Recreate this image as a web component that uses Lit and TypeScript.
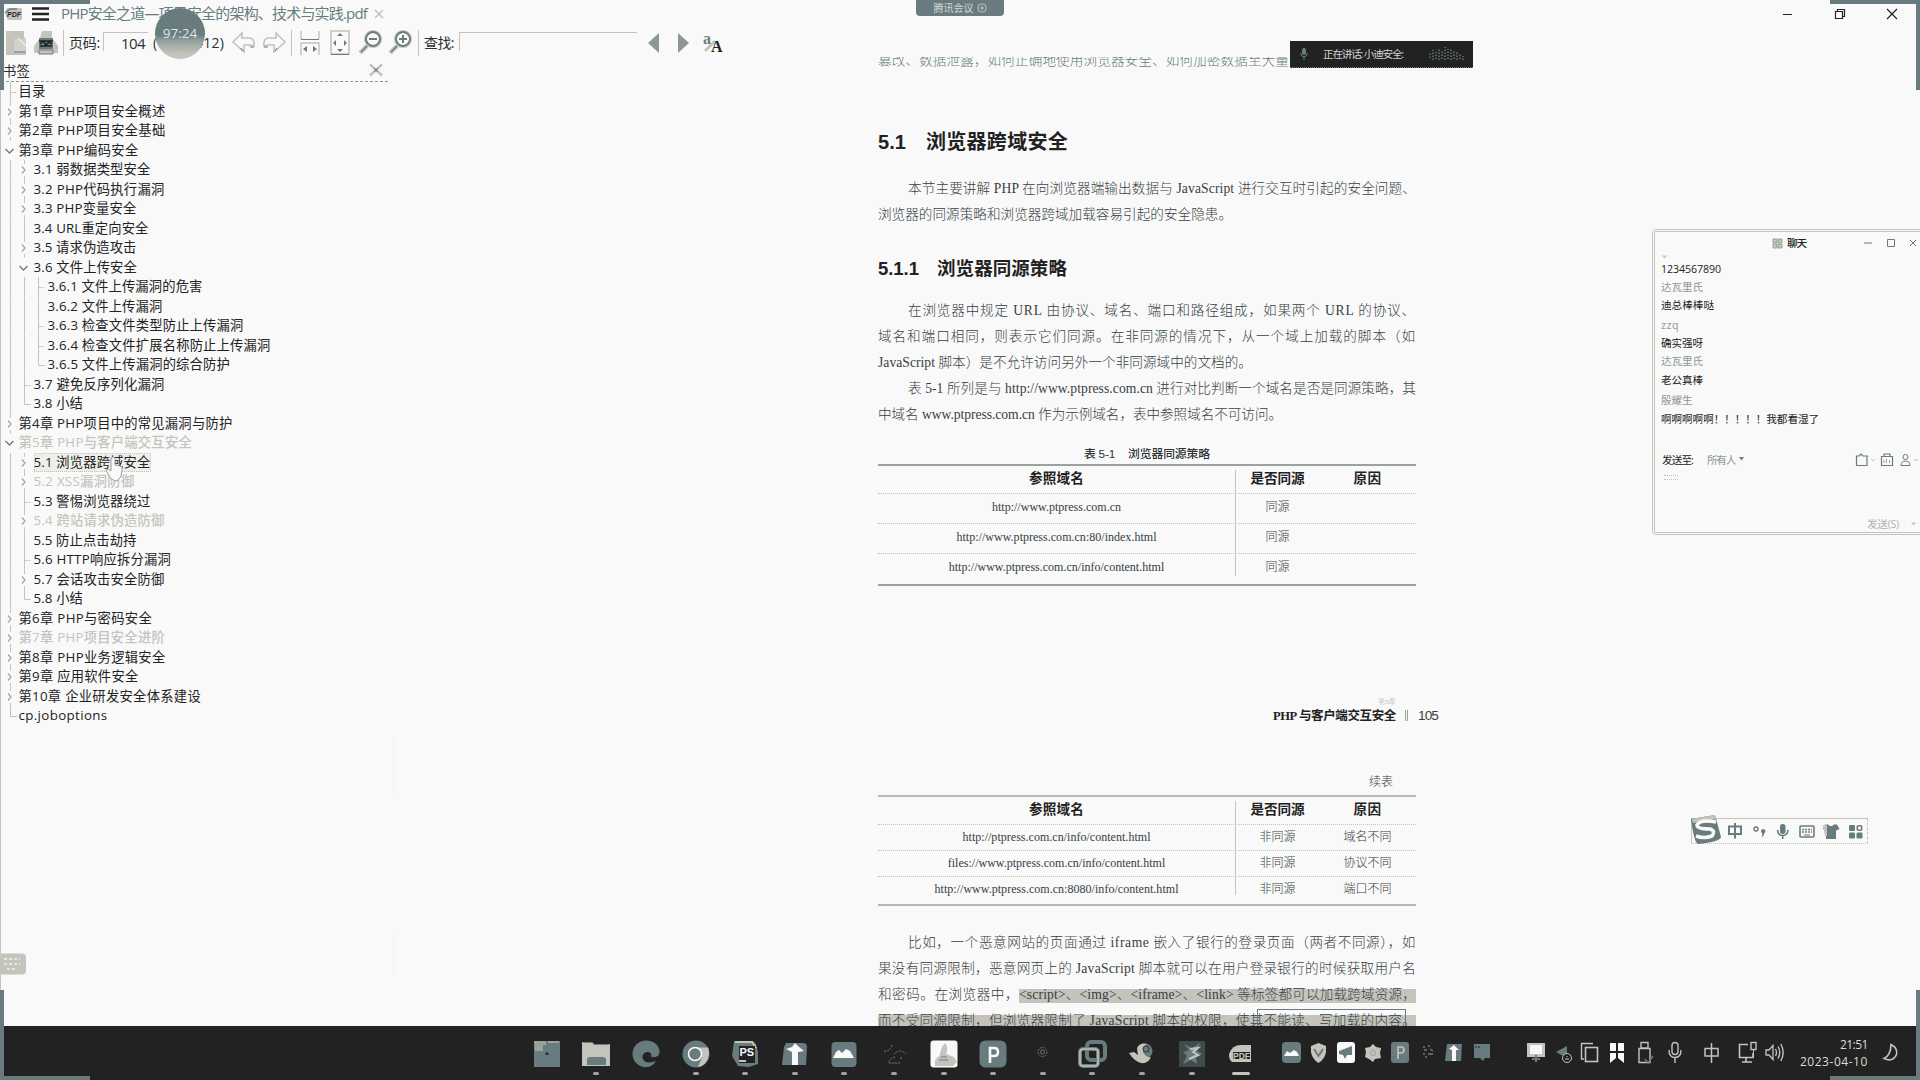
import { LitElement, html, svg, css, nothing, TemplateResult } from "lit";
import { customElement, property } from "lit/decorators.js";
import { classMap } from "lit/directives/class-map.js";

/** One line of text, tracked so that it fills exactly `w` pixels. */
@customElement("fit-text")
class FitText extends LitElement {
  static styles = css`
    :host { display: inline-block; white-space: pre; }
    span { display: inline-block; }
  `;
  @property({ type: Number }) w = 0;
  @property() text = "";
  render() { return html`<span>${this.text}</span>`; }
  updated() {
    const s = this.renderRoot.querySelector("span") as HTMLElement;
    s.style.letterSpacing = "0px";
    const n = Array.from(this.text).length;
    const natural = s.getBoundingClientRect().width;
    if (n > 1 && this.w) s.style.letterSpacing = `${(this.w - natural) / n}px`;
    this.style.width = `${this.w}px`;
  }
}

const fit = (text: string, w: number, cls = "") => html`<fit-text class=${cls} .text=${text} .w=${w}></fit-text>`;
const icon = (w: number, h: number, body: unknown, cls = "") =>
  html`<svg class=${cls} width=${w} height=${h} viewBox="0 0 ${w} ${h}" fill="none">${body}</svg>`;

const T = "#687c80";
const L = "#c4c4bc";
const D = "#222222";
const W = "#f9f9f9";

type Mark = "" | "closed" | "open" | "tee" | "end";
interface Item { d: number; t: string; end: number; m: Mark; faded?: boolean; sel?: boolean }
const tree: Item[] = [
  { d: 0, t: "目录", end: 46, m: "tee" },
  { d: 0, t: "第1章 PHP项目安全概述", end: 166, m: "closed" },
  { d: 0, t: "第2章 PHP项目安全基础", end: 166, m: "closed" },
  { d: 0, t: "第3章 PHP编码安全", end: 139, m: "open" },
  { d: 1, t: "3.1 弱数据类型安全", end: 151, m: "closed" },
  { d: 1, t: "3.2 PHP代码执行漏洞", end: 165, m: "closed" },
  { d: 1, t: "3.3 PHP变量安全", end: 137, m: "closed" },
  { d: 1, t: "3.4 URL重定向安全", end: 149, m: "" },
  { d: 1, t: "3.5 请求伪造攻击", end: 137, m: "closed" },
  { d: 1, t: "3.6 文件上传安全", end: 137.5, m: "open" },
  { d: 2, t: "3.6.1 文件上传漏洞的危害", end: 203, m: "tee" },
  { d: 2, t: "3.6.2 文件上传漏洞", end: 163, m: "" },
  { d: 2, t: "3.6.3 检查文件类型防止上传漏洞", end: 244, m: "tee" },
  { d: 2, t: "3.6.4 检查文件扩展名称防止上传漏洞", end: 271, m: "tee" },
  { d: 2, t: "3.6.5 文件上传漏洞的综合防护", end: 230.5, m: "end" },
  { d: 1, t: "3.7 避免反序列化漏洞", end: 165, m: "tee" },
  { d: 1, t: "3.8 小结", end: 83.5, m: "end" },
  { d: 0, t: "第4章 PHP项目中的常见漏洞与防护", end: 233, m: "closed" },
  { d: 0, t: "第5章 PHP与客户端交互安全", end: 192.5, m: "open", faded: true },
  { d: 1, t: "5.1 浏览器跨域安全", end: 151, m: "closed", sel: true },
  { d: 1, t: "5.2 XSS漏洞防御", end: 135, m: "closed", faded: true },
  { d: 1, t: "5.3 警惕浏览器绕过", end: 151, m: "tee" },
  { d: 1, t: "5.4 跨站请求伪造防御", end: 165, m: "closed", faded: true },
  { d: 1, t: "5.5 防止点击劫持", end: 137, m: "" },
  { d: 1, t: "5.6 HTTP响应拆分漏洞", end: 171.5, m: "tee" },
  { d: 1, t: "5.7 会话攻击安全防御", end: 165, m: "closed" },
  { d: 1, t: "5.8 小结", end: 83.5, m: "end" },
  { d: 0, t: "第6章 PHP与密码安全", end: 152.5, m: "closed" },
  { d: 0, t: "第7章 PHP项目安全进阶", end: 165.5, m: "closed", faded: true },
  { d: 0, t: "第8章 PHP业务逻辑安全", end: 166, m: "closed" },
  { d: 0, t: "第9章 应用软件安全", end: 139, m: "closed" },
  { d: 0, t: "第10章 企业研发安全体系建设", end: 201.5, m: "closed" },
  { d: 0, t: "cp.joboptions", end: 108, m: "end" },
];

const marks: Record<Mark, TemplateResult> = {
  "": svg`<path d="M7.5 0V19.5" stroke=${L}/>`,
  tee: svg`<path d="M7.5 0V19.5" stroke=${L}/><path d="M8 10.5H14" stroke=${L} stroke-dasharray="2 1"/>`,
  end: svg`<path d="M7.5 0V10.5H14" stroke=${L}/>`,
  closed: svg`<path d="M7.5 0V4M7.5 16V19.5" stroke=${L}/><path d="M5 6.5L8 10L5 13.5" stroke="#a0a49e" stroke-width="1.2"/>`,
  open: svg`<path d="M2.5 8L6.5 12L10.5 8" stroke=${T} stroke-width="1.3"/>`,
};

@customElement("bookmark-tree")
class BookmarkTree extends LitElement {
  static styles = css`
    :host { display: block; font: 13.3px/19.5px "Open Sans", "Noto Sans CJK SC", sans-serif; color: #222; }
    .row { display: flex; height: 19.5px; padding-left: 3px; }
    svg { display: block; flex: none; overflow: visible; }
    fit-text { margin-left: 1.5px; height: 19.5px; }
    .d1 { margin-left: 2.5px; }
    .d2 { margin-left: 2.5px; }
    .faded fit-text { color: #c4c4bc; font-weight: 500; }
    .sel fit-text { outline: 1px dotted #c4c4bc; outline-offset: -1px; background: #eeeeea; }
  `;
  render() {
    return tree.map((it) => {
      const start = [19, 34, 48][it.d];
      const guides = [];
      for (let i = 0; i < it.d; i++) guides.push(icon(14, 19.5, marks[""]));
      return html`<div class=${classMap({ row: true, faded: !!it.faded, sel: !!it.sel })}>
        ${guides}${icon(14, 19.5, marks[it.m])}${fit(it.t, it.end - start, "d" + it.d)}
      </div>`;
    });
  }
}

const magnifier = (plus: boolean) => icon(26, 26, svg`
  <path d="M9 16L2 23" stroke=${L} stroke-width="4.5"/><path d="M10 15L3 22" stroke=${T} stroke-width="1.4"/>
  <circle cx="15" cy="9" r="7.6" fill=${W} stroke=${L} stroke-width="3"/><circle cx="15" cy="9" r="7" stroke=${T} stroke-width="1.8"/>
  <path d=${plus ? "M11 9H19M15 5V13" : "M11 9H19"} stroke=${T} stroke-width="2"/>`);

@customElement("reader-header")
class ReaderHeader extends LitElement {
  static styles = css`
    :host { display: block; height: 57px; position: relative; color: #2b3032; font-family: "Open Sans", "Noto Sans CJK SC", sans-serif; }
    svg { display: block; flex: none; overflow: visible; }
    .title { height: 28px; display: flex; align-items: center; padding-left: 5px; box-sizing: border-box; }
    .burger { margin-left: 10px; }
    .name { margin-left: 12px; font-size: 15px; line-height: 24px; height: 24px; margin-top: -3px; color: #687c80; }
    .tabx { margin-left: 7px; }
    .win { margin-left: auto; display: flex; align-items: center; gap: 40px; padding-right: 22px; }
    .bar { height: 29px; display: flex; align-items: center; padding-left: 4px; font-size: 14px; line-height: 24px; }
    .bar fit-text { height: 24px; }
    .sep { width: 1px; height: 26px; background: #c4c4bc; flex: none; }
    .field { border-left: 1px solid #c4c4bc; border-top: 1px solid #c4c4bc; height: 19px; box-sizing: border-box; flex: none; margin-top: -3px; display: flex; }
    .page { width: 45px; margin-left: 3px; line-height: 20px; padding-left: 17px; box-sizing: border-box; font-size: 15px; }
    .page fit-text { height: 20px; }
    .find { width: 178px; margin-left: 5px; }
    .timer { position: absolute; left: 155px; top: 8px; width: 50px; height: 51px; border-radius: 50%; background: linear-gradient(#687c80 52%, #929f9c 64%, #c4c4bc 90%); color: #e4e4de; font: 500 13.5px/50px "Open Sans", sans-serif; text-align: center; z-index: 3; }
    .meeting { position: absolute; left: 916px; top: 0; width: 88px; height: 16px; background: #687c80; border-radius: 0 0 4px 4px; color: #d4d6d0; font-size: 10px; line-height: 15px; display: flex; justify-content: center; align-items: center; gap: 3px; }
  `;
  render() {
    return html`
      <div class="title">
        ${icon(17, 14, svg`<path d="M2 1H17V13H3C0 9 0 4 2 1Z" fill=${L}/><path d="M0 6L5 2H12" stroke=${T} stroke-width="1.5"/><text x="2" y="10" font-size="7" font-weight="700" font-style="italic" font-family="Liberation Sans, sans-serif" fill=${D}>PDF</text>`)}
        ${icon(17, 14, svg`<path d="M0 1.5H17M0 7H17M0 12.5H17" stroke=${D} stroke-width="2.6"/>`, "burger")}
        ${fit("PHP安全之道—项目安全的架构、技术与实践.pdf", 306, "name")}
        ${icon(10, 10, svg`<path d="M1 1L9 9M9 1L1 9" stroke=${L} stroke-width="1.6"/>`, "tabx")}
        <div class="win">
          ${icon(12, 12, svg`<path d="M1 6.5H10" stroke=${D}/>`)}
          ${icon(12, 12, svg`<path d="M1.5 3.5H8.5V10.5H1.5ZM3.5 3V1.5H10.5V8.5H9" stroke=${D} stroke-width="1.2"/>`)}
          ${icon(12, 12, svg`<path d="M1 1L11 11M11 1L1 11" stroke=${D} stroke-width="1.2"/>`)}
        </div>
      </div>
      <div class="bar">
        ${icon(24, 26, svg`<path d="M2 1H20V7L22 9V25H2Z" fill=${L}/><path d="M10 9H22V22H10Z" fill="#d2d2cb"/><path d="M10 22H22" stroke=${T}/><path d="M14 8L22 16" stroke=${W}/>`)}
        <span style="width:5px"></span>
        ${icon(26, 26, svg`<path d="M9 1H19V8L25 16V23H1V16L7 8Z" fill=${L}/><path d="M6 8H20V19H6Z" fill=${T}/><path d="M6 11H20M7 14L10 11L13 15L16 12L19 14M7 16H19" stroke=${D} stroke-width="1.6"/><path d="M6 20H20V24H6Z" fill=${L} stroke=${T}/>`)}
        <span style="width:4px"></span><span class="sep"></span><span style="width:5px"></span>
        ${fit("页码:", 31)}
        <span class="field page">${fit("104", 24)}</span>
        <span style="width:5px"></span>${fit("(118 / 412)", 71)}
        <span style="width:8px"></span>
        ${icon(24, 24, svg`<path d="M1 11L10 2V7H18Q23 8 22 15L18 14H12V21Z" stroke=${L} stroke-width="1.6"/><path d="M11 20L9 17M18 16H22" stroke=${T}/>`)}
        <span style="width:6px"></span>
        ${icon(24, 24, svg`<path d="M23 11L14 2V7H6Q1 8 2 15L6 14H12V21Z" stroke=${L} stroke-width="1.6"/><path d="M13 20L15 17M6 16H2" stroke=${T}/>`)}
        <span style="width:5px"></span><span class="sep"></span><span style="width:8px"></span>
        ${icon(20, 26, svg`<path d="M1 1V9M19 1V9M1 25V13H19V25" stroke=${L} stroke-width="1.4"/><path d="M1 9.5H19" stroke=${T}/><path d="M3 19L7 16V22ZM17 19L13 16V22Z" fill=${T}/>`)}
        <span style="width:10px"></span>
        ${icon(20, 26, svg`<path d="M1 1H19V24H1Z" stroke=${L} stroke-width="1.6"/><path d="M1 24.5H19" stroke=${T}/><path d="M7 6L10 3L13 6ZM7 19L10 22L13 19ZM6 10L3 13L6 16ZM14 10L17 13L14 16Z" fill=${T}/>`)}
        <span style="width:8px"></span>${magnifier(false)}
        <span style="width:4px"></span>${magnifier(true)}
        <span style="width:4px"></span><span class="sep"></span><span style="width:5px"></span>
        ${fit("查找:", 30)}
        <span class="field find"></span>
        <span style="width:11px"></span>
        ${icon(12, 20, svg`<path d="M11 0V20L0 10Z" fill="#8b9896"/>`)}
        <span style="width:18px"></span>
        ${icon(12, 20, svg`<path d="M0 0V20L11 10Z" fill="#8b9896"/>`)}
        <span style="width:13px"></span>
        ${icon(22, 22, svg`<path d="M2 19L12 9" stroke=${L} stroke-width="3"/><text x="0" y="12" font-size="16" font-weight="700" font-family="Liberation Serif, serif" fill=${T}>a</text><text x="8" y="20" font-size="16" font-weight="700" font-family="Liberation Serif, serif" fill=${D}>A</text>`)}
      </div>
      <div class="timer">97:24</div>
      <div class="meeting">腾讯会议 ${icon(10, 10, svg`<rect x="1" y="1" width="8" height="8" rx="3" stroke=${L}/><path d="M3 5H7M5 3V7" stroke=${L}/>`)}</div>
    `;
  }
}

interface Row { u: string; w: number; s: string; r: string }
const same: Row[] = [
  { u: "http://www.ptpress.com.cn", w: 129, s: "同源", r: "" },
  { u: "http://www.ptpress.com.cn:80/index.html", w: 200, s: "同源", r: "" },
  { u: "http://www.ptpress.com.cn/info/content.html", w: 215.5, s: "同源", r: "" },
];
const diff: Row[] = [
  { u: "http://ptpress.com.cn/info/content.html", w: 188, s: "非同源", r: "域名不同" },
  { u: "files://www.ptpress.com.cn/info/content.html", w: 217.5, s: "非同源", r: "协议不同" },
  { u: "http://www.ptpress.com.cn:8080/info/content.html", w: 244, s: "非同源", r: "端口不同" },
];

@customElement("pdf-page")
class PdfPage extends LitElement {
  static styles = css`
    :host { display: block; box-sizing: border-box; width: 538px; font: 300 13.6px/26px "Liberation Serif", "Noto Sans CJK SC", serif; color: #364043; }
    fit-text { vertical-align: top; height: 26px; }
    .line { height: 26px; white-space: nowrap; }
    .in { padding-left: 30px; }
    .first { margin-top: -9px; color: #687c80; }
    h2, h3 { margin: 0; height: 40px; line-height: 40px; display: flex; font-family: "Liberation Sans", "Noto Sans CJK SC", sans-serif; font-weight: 700; color: #222; }
    h2 fit-text, h3 fit-text { height: 40px; }
    h2 { font-size: 20px; margin-top: 48px; gap: 20px; }
    h3 { font-size: 18.5px; margin-top: 21px; gap: 18px; }
    .p1 { margin-top: 13.5px; }
    .p2 { margin-top: 9.5px; }
    .p3 { margin-top: 24.5px; }
    .cap { margin-top: 16px; height: 20px; display: flex; justify-content: center; gap: 13px; font: 500 11.8px/20px "Liberation Sans", "Noto Sans CJK SC", sans-serif; color: #2d3335; }
    .cap fit-text { height: 20px; }
    .table { border-top: 2px solid #9aa39f; border-bottom: 2px solid #9aa39f; height: 117.5px; }
    .table.b { height: 107px; border-color: #b6b9b2; }
    .row { display: grid; grid-template-columns: 357px 84px 97px; box-sizing: border-box; height: 30px; border-bottom: 1px dotted #c4c4bc; text-align: center; }
    .row > div { display: flex; align-items: flex-start; justify-content: center; height: 100%; font-size: 12px; line-height: 26px; box-sizing: border-box; }
    .row fit-text { height: 26px; }
    .b .row { height: 26.3px; }
    .b .row:not(.head) fit-text { margin-top: -1px; }
    .row > .s { border-left: 1px solid #c4c4bc; }
    .row.head, .b .row.head { height: 28px; }
    .row.head > div { font-weight: 700; font-size: 13.6px; color: #222; }
    .row.head > .s { margin-top: 4px; height: 23px; }
    .row.head > .s fit-text { margin-top: -4px; }
    .row:last-child { border-bottom: 0; }
    .row:last-child > .s { height: calc(100% - 8px); }
    .folio { margin-top: 110px; width: 560px; display: flex; justify-content: flex-end; align-items: flex-end; height: 29px; }
    .folio fit-text { height: 18px; line-height: 18px; }
    .chap { display: flex; flex-direction: column; align-items: flex-end; }
    .chap .tiny { font-size: 7px; line-height: 10px; height: 10px; color: #a9ada6; }
    .chap .t { font-weight: 700; font-size: 12.5px; color: #222; }
    .bars { display: flex; gap: 1px; margin: 0 10px 4px 9px; }
    .bars i { width: 1px; height: 11px; background: #9aa39f; }
    .num { font-family: "Liberation Sans", sans-serif; font-weight: 400; }
    .cont { margin-top: 46px; height: 24px; line-height: 22px; text-align: right; padding-right: 23px; font-size: 12px; }
    .hl { background: linear-gradient(#c4c4bc, #c4c4bc) 0 7px / 100% 14px no-repeat; }
    .mark { position: relative; }
    .box { position: absolute; left: 379px; top: 1px; width: 147px; height: 30px; border: 1px solid #687c80; }
  `;
  private table(rows: Row[], b: boolean) {
    return html`<div class=${classMap({ table: true, b })}>
      <div class="row head"><div>${fit("参照域名", 55)}</div><div class="s">${fit("是否同源", 54)}</div><div>${fit("原因", 28)}</div></div>
      ${rows.map((r) => html`<div class="row"><div>${fit(r.u, r.w)}</div><div class="s">${fit(r.s, r.s.length * 12)}</div><div>${r.r ? fit(r.r, 48) : nothing}</div></div>`)}
    </div>`;
  }
  render() {
    return html`
      <div class="line first">${fit("篡改、数据泄露，如何正确地使用浏览器安全、如何加密数据至大量", 411)}</div>
      <h2>${fit("5.1", 28)}${fit("浏览器跨域安全", 142)}</h2>
      <div class="p1">
        <div class="line in">${fit("本节主要讲解 PHP 在向浏览器端输出数据与 JavaScript 进行交互时引起的安全问题、", 508)}</div>
        <div class="line">${fit("浏览器的同源策略和浏览器跨域加载容易引起的安全隐患。", 354)}</div>
      </div>
      <h3>${fit("5.1.1", 41)}${fit("浏览器同源策略", 130)}</h3>
      <div class="p2">
        <div class="line in">${fit("在浏览器中规定 URL 由协议、域名、端口和路径组成，如果两个 URL 的协议、", 508)}</div>
        <div class="line">${fit("域名和端口相同，则表示它们同源。在非同源的情况下，从一个域上加载的脚本（如", 538)}</div>
        <div class="line">${fit("JavaScript 脚本）是不允许访问另外一个非同源域中的文档的。", 374)}</div>
        <div class="line in">${fit("表 5-1 所列是与 http://www.ptpress.com.cn 进行对比判断一个域名是否是同源策略，其", 508)}</div>
        <div class="line">${fit("中域名 www.ptpress.com.cn 作为示例域名，表中参照域名不可访问。", 404)}</div>
      </div>
      <div class="cap">${fit("表 5-1", 31)}${fit("浏览器同源策略", 82)}</div>
      ${this.table(same, false)}
      <div class="folio">
        <div class="chap">${fit("第5章", 18, "tiny")}${fit("PHP 与客户端交互安全", 123, "t")}</div>
        <span class="bars"><i></i><i></i></span>${fit("105", 20, "num")}
      </div>
      <div class="cont">${fit("续表", 24)}</div>
      ${this.table(diff, true)}
      <div class="p3">
        <div class="line in">${fit("比如，一个恶意网站的页面通过 iframe 嵌入了银行的登录页面（两者不同源），如", 508)}</div>
        <div class="line">${fit("果没有同源限制，恶意网页上的 JavaScript 脚本就可以在用户登录银行的时候获取用户名", 538)}</div>
        <div class="line">${fit("和密码。在浏览器中，", 141)}${fit("<script>、<img>、<iframe>、<link> 等标签都可以加载跨域资源，", 397, "hl")}</div>
        <div class="line mark">${fit("而不受同源限制，但浏览器限制了 JavaScript 脚本的权限，使其不能读、写加载的内容。", 538, "hl")}<span class="box"></span></div>
      </div>`;
  }
}

const chat: [string, number, boolean, number][] = [
  ["1234567890", 60, false, 18],
  ["达瓦里氏", 42, true, 18.7],
  ["迪总棒棒哒", 53, false, 19.5],
  ["zzq", 18, true, 18],
  ["确实强呀", 42, false, 18.3],
  ["达瓦里氏", 42, true, 19.5],
  ["老公真棒", 42, false, 19.5],
  ["殷耀生", 31.5, true, 19.5],
  ["啊啊啊啊啊！！！！！我都看湿了", 158, false, 19.5],
];

@customElement("chat-window")
class ChatWindow extends LitElement {
  static styles = css`
    :host { display: block; box-sizing: border-box; width: 290px; height: 306px; border: 3px double #c4c4bc; border-radius: 4px; background: #f9f9f9; font: 10.6px/18px "Open Sans", "Noto Sans CJK SC", sans-serif; color: #222; padding: 1px 0 0 6px; }
    fit-text { height: 18px; display: block; }
    svg { display: block; }
    .top { display: flex; height: 20px; align-items: center; padding-left: 111px; }
    .top fit-text { margin: 0 57px 0 4px; font-weight: 500; }
    .caret { margin: 2px 0 0 1px; height: 4.500px; }
    .dim { color: #8b9794; }
    .to { display: flex; align-items: center; height: 18px; margin-top: 21px; padding-left: 1px; }
    .foot { display: flex; align-items: center; color: #b0b3ac; margin: 35px 0 0 206px; }
    .dots { width: 14px; height: 5px; margin: 6px 0 0 3px; border-top: 1px dotted #c4c4bc; border-bottom: 1px dotted #c4c4bc; box-sizing: border-box; }
  `;
  render() {
    const caret = icon(6, 4, svg`<path d="M0 0.5H5L2.5 3.5Z" fill=${L}/>`);
    return html`
      <div class="top">
        ${icon(11, 11, svg`<path d="M1 1H5V5H1ZM6 1H10V5H6ZM1 6H5V10H1ZM6 6H10V10H6Z" fill=${L} stroke="#98a29f"/>`)}${fit("聊天", 19)}
        ${icon(54, 10, svg`<path d="M1 5H9" stroke=${T}/><path d="M24.5 1.5H31.5V8.5H24.5Z" stroke=${T}/><path d="M47 2L53 8M53 2L47 8" stroke=${T}/>`)}
      </div>
      <div class="caret">${caret}</div>
      ${chat.map(([t, w, dim, h]) => html`<div style="height:${h}px">${fit(t, w, dim ? "dim" : "")}</div>`)}
      <div class="to">
        ${fit("发送至:", 31)}<span style="width:14px"></span>${fit("所有人", 28, "dim")}<span style="width:4px"></span>
        ${icon(6, 5, svg`<path d="M0 0H5L2.5 3.5Z" fill=${T}/>`)}<span style="width:110px"></span>
        ${icon(68, 14, svg`
          <path d="M1.5 3H4L6 1L8 3H12V12.5H1.5Z" stroke=${T} stroke-width="1.2"/><path d="M12 2L14 4" stroke=${L}/><path d="M16 6L18 8L20 6" stroke=${L}/>
          <path d="M26.5 3.5H37.5V12.5H26.5ZM29 3V1H35V3" stroke=${T} stroke-width="1.2"/><path d="M29 10V7M31.5 10V6M34.5 10V7" stroke="#98a29f"/>
          <circle cx="50.500" cy="4" r="2.500" stroke=${T}/><path d="M46 12.500Q46 8 50.500 8T55 12.500Z" stroke=${T}/><path d="M59 6L61 8L63 6" stroke=${L}/>`)}
      </div>
      <div class="dots"></div>
      <div class="foot">${fit("发送(S)", 32)}<span style="width:12px"></span>${caret}</div>`;
  }
}

@customElement("ime-bar")
class ImeBar extends LitElement {
  static styles = css`
    :host { display: block; box-sizing: border-box; width: 177px; height: 26px; border: 1px solid #c4c4bc; border-bottom-style: dotted; border-right-style: dashed; }
    svg { display: block; margin: -5px 0 0 -2px; overflow: visible; }
  `;
  render() {
    return icon(176, 32, svg`
      <path d="M1 5L25 1L31 23Q30 28 8 30Q4 29 1 5Z" fill=${T}/><path d="M2 5L25 1L26 5L3 9Z" fill=${L}/>
      <path d="M26 8Q10 5 7 11Q7 15 20 15Q26 17 22 22Q14 25 6 22" stroke=${W} stroke-width="3.6"/>
      <path d="M39 12.500H51V20H39ZM45 9V24.500" stroke=${T} stroke-width="2"/>
      <circle cx="66" cy="15" r="2" stroke=${T} stroke-width="1.400"/><path d="M71 17.500A2.200 2.200 0 1 1 74.500 19Q74 22 71.500 23Q72.500 21.500 72.300 20Z" fill=${T}/>
      <rect x="90" y="10" width="5.500" height="10" rx="2.700" fill=${T}/><path d="M87.500 16Q88 21.500 92.700 21.500T98 16M92.700 21V25" stroke=${T} stroke-width="1.600"/>
      <rect x="110" y="12" width="14" height="11" rx="1" stroke=${T} stroke-width="1.600"/><path d="M112 15.500H122M112 18H122" stroke=${T} stroke-width="1.500" stroke-dasharray="2 1"/><path d="M114 21H120" stroke=${T}/>
      <path d="M135 10.500H138Q141 14 144 10.500H147L149.500 15L146 16.500V25H136V16.500L133 15Z" fill=${T}/><path d="M133 11H137V22H135Z" fill=${L}/>
      <rect x="159" y="11" width="6" height="6" rx="1.200" fill=${T}/><rect x="159" y="18.500" width="6" height="6" rx="1.200" fill=${T}/><rect x="166.500" y="18.500" width="6" height="6" rx="1.200" fill=${T}/><rect x="167.300" y="11.800" width="4.400" height="4.400" rx="1" stroke=${T} stroke-width="1.600"/>`);
  }
}

// Pinned applications, each drawn in a 28px square.
const apps: TemplateResult[] = [
  svg`<path d="M1 1H27V27H1Z" fill=${T}/><path d="M1 1H13V5H10V11H2ZM15 1H26V3H15Z" fill="#98a29b"/><path d="M12 14H16M14 12V15" stroke=${D}/>`,
  svg`<path d="M0 2H10L12 4H28V26H0Z" fill=${L}/><path d="M1 2.500H10L12 4.500H27" stroke=${T}/><path d="M5 25V20Q5 17 8 17H21Q24 17 24 20V25Z" fill=${T}/>`,
  svg`<path d="M14 0.500C22 0.500 28 6 27.500 12.500C27 17 22 18 19 16.500C21 11 12 10 10.500 16C10 22 16 24 24 21C21 26 16 28 12 27C5 26 0.500 20 0.500 14C0.500 6 7 0.500 14 0.500Z" fill=${T}/>`,
  svg`<circle cx="14" cy="14" r="13.500" fill=${T}/><path d="M11 7.500H26C29 15 25 26 16 27L20 17Z" fill=${L}/><circle cx="13" cy="14" r="6.500" fill=${T} stroke=${W} stroke-width="1.500"/>`,
  svg`<path d="M3 1H22L25 4L27 12V24L18 27L7 26L1 16Z" fill=${T}/><path d="M4 2H21L25 8" stroke=${L} stroke-width="2"/><path d="M8 6H24V23H8Z" fill=${D}/><text x="8.500" y="15.500" font-size="11" font-weight="700" font-family="Liberation Sans, sans-serif" fill="#f9f9f9">PS</text><path d="M8 21H15" stroke=${W} stroke-width="1.500"/>`,
  svg`<path d="M5 3H22Q26 3 26 7L25 25H1L3 7Z" fill=${T}/><path d="M14 3L18 7L23 11L17 12V25H11V12L5 9L11 7Z" fill=${W}/>`,
  svg`<rect x="1.500" y="2" width="25" height="25" rx="4" fill=${T}/><path d="M3 18L6 12L9 10L12 13L16 9L20 11L24 18Z" fill=${W}/>`,
  svg`<path d="M12 5Q10 12 4 11M14 14Q20 8 26 14M9 23H20M15 17Q10 18 8 23M21 17V20" stroke=${T} stroke-dasharray="2 1"/>`,
  svg`<rect x="0.500" y="0.500" width="27" height="27" rx="3" fill=${W}/><path d="M15 3Q19 7 16 14L24 17L27 22L23 26H5V20L10 15Q10 9 15 3Z" fill=${L}/><path d="M11 17H17M9 20H18" stroke=${T}/>`,
  svg`<rect x="0.500" y="0.500" width="27" height="27" rx="6" fill=${T}/><path d="M11 23V8H15Q19 8 19 12T15 16H11" stroke=${W} stroke-width="2.600"/>`,
  svg`<circle cx="13.500" cy="12" r="4.500" stroke=${T} stroke-dasharray="2 1"/><circle cx="13.500" cy="12" r="2" stroke=${T}/>`,
  svg`<rect x="9" y="2" width="18" height="18" rx="4" stroke=${T} stroke-width="4"/><rect x="2" y="9" width="18" height="17" rx="3" stroke=${T} stroke-width="4"/><rect x="2" y="9" width="18" height="17" rx="3" stroke=${L} stroke-width="1.500"/><path d="M12 12H18V17H12Z" fill=${D}/>`,
  svg`<circle cx="17" cy="11" r="7.500" fill=${T}/><path d="M9 8Q12 2 19 4Q14 6 15 12Q18 18 23 17Q20 24 13 23Q6 21 1 13L6 12L10 15Z" fill=${L}/><circle cx="18" cy="9" r="3" stroke=${D} stroke-width="0.800"/>`,
  svg`<rect x="1" y="1" width="26" height="26" fill=${T} opacity="0.450"/><path d="M6 4L14 8L22 3L19 11L24 14L18 18L19 24L13 20L5 24L9 16L5 12L11 10Z" fill=${T}/><path d="M12 9L20 8L15 12L20 15L11 19" stroke=${L} stroke-width="2"/>`,
  svg`<path d="M2 14Q5 5 14 5H24V22H5Q2 20 2 14Z" fill=${L}/><path d="M6 12H23V19H6Z" fill=${D}/><text x="6" y="18.500" font-size="8.500" font-weight="700" font-family="Liberation Sans, sans-serif" fill=${L}>PDF</text>`,
];

const tray = svg`
  <rect x="1" y="1" width="19" height="21" rx="4" fill=${T}/><path d="M3 15L6 10L9 12L13 9L16 11L18 15Z" fill=${W}/>
  <path d="M37.500 2L45 5V11Q44 18 37.500 22Q31 18 30 11V5Z" fill=${L}/><path d="M33 8L37.500 15L42 8" stroke=${T} stroke-width="2"/>
  <rect x="56" y="1" width="18" height="21" rx="3" fill=${W}/><path d="M58 10L71 5V14H66L64 18L62 14L58 13Z" fill=${T}/>
  <path d="M92 3L95 6L100 7L99 12L100 17L94 18L92 21L88 18L84 16L85 11L84 7L89 6Z" fill=${L}/><circle cx="92" cy="12" r="2.500" stroke="#98a29f"/>
  <rect x="110" y="1" width="18" height="21" rx="3" fill=${T}/><path d="M117 18V6H120Q123 6 123 9T120 12H117" stroke=${L} stroke-width="1.600"/>
  <path d="M142 6H144M147 5H149M143 9H146M149 8L152 10M142 13H144M147 13H152M144 16H146" stroke=${T} stroke-width="1.400"/>
  <path d="M166 3H181L180 20H164Z" fill=${T}/><path d="M173 4L178 9H175V20H171V9L168 8Z" fill=${W}/>
  <path d="M193 3H209V17H204L202 20L199 17H193Z" fill=${T}/><path d="M194 6H200" stroke=${D} stroke-dasharray="2 1"/>
  <path d="M246 2H264V16H246Z" fill=${L}/><path d="M249 4H261V13H249Z" fill=${W}/><path d="M255 14V21M251 18H259" stroke=${T} stroke-width="2"/>
  <path d="M275 11L286 5V16L280 14Z" fill=${T}/><circle cx="286" cy="17" r="4.500" fill=${D} stroke=${L}/><path d="M284 18H288M286 15V16" stroke=${L}/>
  <path d="M303 18H300.500V2.500H312" stroke=${L} stroke-width="1.400"/><rect x="304.500" y="6.500" width="12" height="14" stroke=${L} stroke-width="1.600"/>
  <path d="M329 2H335V10H329ZM337 2H343V10H337ZM329 12H335V17L329 22ZM337 12H343V22L337 17Z" fill=${W}/>
  <path d="M360 1.500H367V7H360ZM358 7.500H369V21.500H358Z" stroke=${L} stroke-width="1.400"/><path d="M364 18L367 22L372 15" stroke=${T} stroke-width="1.500"/>
  <rect x="391" y="1.500" width="6" height="12" rx="3" stroke=${L} stroke-width="1.400"/><path d="M388 9Q388 16.500 394 16.500T400 9M394 17V22" stroke=${L} stroke-width="1.400"/>
  <path d="M424 7.500H437V15H424ZM430.500 2V22" stroke=${L} stroke-width="1.500"/>
  <path d="M467 3.500H458.500V16.500H472V12M461 21H471M465 17V21" stroke=${L} stroke-width="1.600"/><rect x="470" y="1.500" width="5" height="7" stroke=${L} stroke-width="1.400"/><path d="M472.500 9V16" stroke=${L}/>
  <path d="M485 9H488L492 4.500V18.500L488 14H485Z" stroke=${L} stroke-width="1.300"/><path d="M494.500 8Q496.500 11.500 494.500 15M497 5.500Q500.500 11.500 497 17.500M499.800 3Q504.500 11.500 499.800 20" stroke=${L} stroke-width="1.400"/>`;

@customElement("task-bar")
class TaskBar extends LitElement {
  static styles = css`
    :host { display: flex; box-sizing: border-box; height: 54px; background: #222; padding-left: 522px; position: relative; font: 12px/17px "Open Sans", sans-serif; color: #dcdcd6; }
    svg { display: block; overflow: visible; flex: none; }
    .app { width: 49.6px; display: flex; flex-direction: column; align-items: center; padding-top: 14px; box-sizing: border-box; flex: none; }
    .dot { width: 6px; height: 3px; border-radius: 1.5px; background: #9ca5a1; margin-top: 4px; }
    .dot.none { background: none; }
    .dot.active { width: 18px; background: #c4c4bc; }
    .tray { margin: 15px 0 0 15px; flex: none; }
    .clock { display: flex; flex-direction: column; align-items: flex-end; margin: 10px 0 0 14px; }
    .clock fit-text { height: 17px; }
    .moon { margin: 17px 0 0 14px; }
  `;
  render() {
    return html`
      ${apps.map((a, i) => html`<div class="app">${icon(28, 28, a)}<span class=${classMap({ dot: true, none: i === 0 || i === 2, active: i === 14 })}></span></div>`)}
      ${icon(505, 24, tray, "tray")}
      <div class="clock">${fit("21:51", 28)}${fit("2023-04-10", 68)}</div>
      ${icon(16, 18, svg`<path d="M9 1.500Q16 5 14.500 11.500Q11 19.500 2 15.500Q9 12 9 1.500Z" stroke=${L} stroke-width="1.600"/>`, "moon")}`;
  }
}

@customElement("app-root")
class AppRoot extends LitElement {
  static styles = css`
    :host { display: flex; flex-direction: column; position: relative; width: 1920px; height: 1080px; overflow: hidden; background: #f9f9f9; font-family: "Open Sans", "Noto Sans CJK SC", sans-serif; }
    reader-header { flex: none; }
    main { flex: 1; min-height: 0; display: flex; overflow: hidden; }
    aside { width: 394px; box-sizing: border-box; border-left: 1px solid #c4c4bc; flex: none; background: repeating-linear-gradient(#dededa 0 1px, transparent 1px 4px) 392px 679px / 1px 60px no-repeat, repeating-linear-gradient(#dededa 0 1px, transparent 1px 4px) 392px 877px / 1px 42px no-repeat; }
    .panel { display: flex; align-items: center; justify-content: space-between; box-sizing: border-box; height: 25px; width: 387px; padding: 3px 5px 0 2px; border-bottom: 1px dashed #8b9896; font-size: 13.3px; line-height: 20px; color: #2b3032; }
    .panel svg { margin-top: -2px; }
    bookmark-tree { margin-left: -1px; }
    pdf-page { margin-left: 484px; flex: none; }
    task-bar { flex: none; }
    .speaker { position: absolute; left: 1290px; top: 41px; width: 183px; height: 27px; box-sizing: border-box; background: #222; border-bottom: 1px dotted #687c80; display: flex; align-items: center; padding-left: 9px; color: #d4d6d0; font-size: 10.500px; line-height: 24px; }
    .speaker fit-text { height: 24px; margin: 0 24px 0 14px; }
    chat-window { position: absolute; left: 1652px; top: 229px; }
    ime-bar { position: absolute; left: 1691px; top: 818px; }
    .tag { position: absolute; left: 0; top: 953px; }
    .cursor { position: absolute; left: 104px; top: 456px; }
    .c { position: absolute; width: 90px; height: 90px; box-sizing: border-box; border: 0 solid #687c80; z-index: 4; }
    .tl { left: 0; top: 0; border-width: 4px 0 0 4px; }
    .tr { right: 0; top: 0; border-width: 4px 4px 0 0; }
    .bl { left: 0; bottom: 0; border-width: 0 0 4px 4px; }
    .br { right: 0; bottom: 0; border-width: 0 4px 4px 0; }
  `;
  render() {
    return html`
      <reader-header></reader-header>
      <main>
        <aside>
          <div class="panel">${fit("书签", 27)}${icon(14, 12, svg`<path d="M1 0.500L13 11.500M13 0.500L1 11.500" stroke=${L} stroke-width="2.600"/><path d="M5 4L9 8M9 4L5 8" stroke=${T}/>`)}</div>
          <bookmark-tree></bookmark-tree>
        </aside>
        <pdf-page></pdf-page>
      </main>
      <task-bar></task-bar>
      <div class="speaker">
        ${icon(10, 14, svg`<rect x="3" y="1" width="4" height="7" rx="2" fill=${T}/><path d="M1.500 6Q2 10 5 10T8.500 6M5 10V13" stroke=${T}/>`)}
        ${fit("正在讲话: 小迪安全:", 80)}
        ${icon(40, 18, svg`<path d="M3 13V8M6 15V5M9 14V7M12 15V3M15 14V5M18 15V2M21 14V4M24 15V3M27 14V6M30 15V7M33 14V9M36 15V11" stroke=${T} stroke-dasharray="1.500 1.500" stroke-width="1.500"/>`)}
      </div>
      <chat-window></chat-window>
      <ime-bar></ime-bar>
      ${icon(28, 22, svg`<rect x="-4" y="0.500" width="30" height="21" rx="4" fill=${L}/><path d="M4 6H20M4 11H20M7 16H17" stroke="#e6e6e2" stroke-width="2" stroke-dasharray="3 2"/>`, "tag")}
      ${icon(20, 26, svg`<path d="M7 12V3Q7 1 9 1T11 3V9L16 10Q19 11 18 15L17 20Q15 25 11 25Q7 24 4 18L2 14Q4 12 7 15Z" fill=${W} stroke="#98a29f"/>`, "cursor")}
      <div class="c tl"></div><div class="c tr"></div><div class="c bl"></div><div class="c br"></div>`;
  }
}
